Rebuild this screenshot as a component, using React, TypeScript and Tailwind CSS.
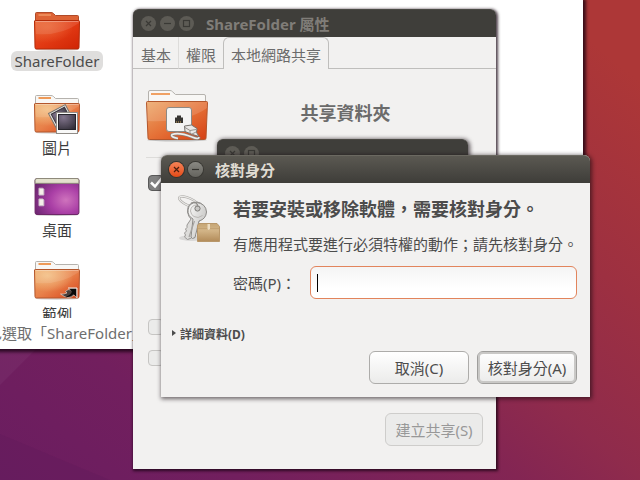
import type { ReactNode } from "react";

type Tone = "active" | "inactive";

function WindowButton({ kind, tone }: { kind: "close" | "min" | "max"; tone: Tone }) {
  const names = { close: "關閉", min: "最小化", max: "最大化" };
  const color =
    tone === "inactive"
      ? "bg-[#5d5b55] text-[#3a3935]"
      : kind === "close"
        ? "bg-linear-to-b from-[#f58255] to-[#e24912] text-[#4a1e0e] ring-1 ring-[#35332e]"
        : "bg-linear-to-b from-[#8a8983] to-[#65645e] text-[#33322e] ring-1 ring-[#3a3934]";
  return (
    <button type="button" aria-label={names[kind]} className={`size-[15px] rounded-full ${color}`}>
      <svg viewBox="0 0 15 15" className="size-[15px]" fill="none" stroke="currentColor" strokeWidth="1.2">
        {kind === "close" && <path d="M5 5l5 5M10 5l-5 5" />}
        {kind === "min" && <path d="M4 7.5h7" />}
        {kind === "max" && <rect x="4.5" y="4.5" width="6" height="6" />}
      </svg>
    </button>
  );
}

function TitleBar({ title, tone, kinds }: { title?: string; tone: Tone; kinds: ("close" | "min" | "max")[] }) {
  const look =
    tone === "active"
      ? "bg-linear-to-b from-[#5b5952] to-[#3e3d39] text-[#dfdbd2] border-t border-[#6b6961]"
      : "bg-[#3f3e3a] text-[#807d78] border-t border-[#4a4944]";
  return (
    <header className={`flex h-7 items-center gap-3 rounded-t-md px-2 ${look}`}>
      <div className="flex gap-1">
        {kinds.map((kind) => (
          <WindowButton key={kind} kind={kind} tone={tone} />
        ))}
      </div>
      {title && <h2 className="font-bold leading-5">{title}</h2>}
    </header>
  );
}

function FolderIcon({ id, red, children }: { id: string; red?: boolean; children?: ReactNode }) {
  return (
    <svg viewBox="0 0 46 39" className="h-[39px] w-[46px] overflow-visible" aria-hidden="true">
      <defs>
        <linearGradient id={id} x1="0" y1="0" x2="1" y2="1">
          <stop offset="0" stopColor={red ? "#e85f2c" : "#eda15c"} />
          <stop offset="0.5" stopColor={red ? "#e23a14" : "#e8814a"} />
          <stop offset="1" stopColor={red ? "#cf2404" : "#d8431a"} />
        </linearGradient>
        <radialGradient id={`${id}-glow`} cx="0.28" cy="0.2" r="0.6">
          <stop offset="0" stopColor={red ? "#ea6a3a" : "#f5cb92"} stopOpacity="0.8" />
          <stop offset="1" stopColor={red ? "#ea6a3a" : "#f5cb92"} stopOpacity="0" />
        </radialGradient>
      </defs>
      <ellipse cx="23" cy="37.6" rx="22" ry="1.4" fill="#000" opacity="0.14" />
      <path
        d="M1.5 10V1.5Q1.5 .5 2.5 .5H17Q18.5 .5 19.5 1.5L21.5 3.5H43.5Q44.5 3.5 44.5 4.5V10Z"
        fill={red ? "#dd6335" : "#f8f7f5"}
        stroke={red ? "#b04a28" : "#b5b2ad"}
      />
      <path d="M4.5 3H17" stroke={red ? "#ec8a58" : "#ee9a58"} strokeWidth="2" />
      <path d="M.5 9Q.5 8.5 1.5 8.5H44.5Q45.5 8.5 45.5 9.5L45 35.5Q45 37 43.5 37H2.5Q1 37 1 35.5Z" fill={`url(#${id})`} stroke={red ? "#b32a08" : "#b3562c"} />
      <path d="M1 9H45V36.5H1.5Z" fill={`url(#${id}-glow)`} />
      <path d="M2 22Q27 24 45 11V9.5H1.5Z" fill="#fff" opacity="0.1" />
      <path d="M1.5 9.5H44.5" stroke="#fff" opacity="0.35" />
      {children}
    </svg>
  );
}

function PicturesEmblem() {
  return (
    <>
      <defs>
        <radialGradient id="photo" cx="0.3" cy="0.2" r="1">
          <stop offset="0" stopColor="#82758d" />
          <stop offset="1" stopColor="#2c2932" />
        </radialGradient>
      </defs>
      <g transform="rotate(-28 26 22)">
        <rect x="17.5" y="13.5" width="19" height="19" fill="#e8e6e3" stroke="#77736c" />
        <rect x="19.5" y="15.5" width="15" height="14" fill="url(#photo)" stroke="#3c3840" />
      </g>
      <rect x="22.5" y="17.5" width="21" height="21" fill="#f8f8f7" stroke="#908c87" />
      <rect x="24.5" y="19.5" width="17" height="15" fill="url(#photo)" stroke="#26242b" />
    </>
  );
}

function LinkEmblem() {
  return (
    <>
      <path d="M26.5 33Q30 33.5 33 32L31.5 30.5Q34 27.5 37 29L35.5 27.5H42.5V36.5L40 34Q35 39.5 26.5 33Z" fill="#4a3f3b" stroke="#e9e4df" strokeWidth="0.6" />
      <path d="M35 27.5H42.5V36L39.5 33Q36 37 31 36Q37 34 38 30.5Z" fill="#080808" />
      <path d="M34 27H43V37" fill="none" stroke="#f1ece8" />
    </>
  );
}

function DesktopIcon() {
  return (
    <svg viewBox="0 0 46 39" className="h-[39px] w-[46px]" aria-hidden="true">
      <defs>
        <radialGradient id="desk" cx="0.7" cy="0.6" r="0.8">
          <stop offset="0" stopColor="#cf73bd" />
          <stop offset="0.45" stopColor="#aa3fa6" />
          <stop offset="1" stopColor="#69256f" />
        </radialGradient>
      </defs>
      <ellipse cx="23" cy="37.7" rx="22" ry="1.2" fill="#000" opacity="0.2" />
      <rect x="0.5" y="0.5" width="45" height="37" rx="2" fill="url(#desk)" stroke="#6a2263" />
      <path d="M.5 5.5V2.5Q.5 .5 2.5 .5H43.5Q45.5 .5 45.5 2.5V5.5Z" fill="#e3e1cd" stroke="#8d8b7a" />
      <path d="M4.5 10.5H8.5L9.5 11.5V17.5H4.5ZM4.5 21.5H8.5L9.5 22.5V28.5H4.5Z" fill="#f4efe9" stroke="#c8b9c6" />
    </svg>
  );
}

function ShareIcon() {
  return (
    <svg viewBox="0 0 62 52" className="h-[52px] w-[62px] shrink-0" aria-hidden="true">
      <defs>
        <linearGradient id="share" x1="0" y1="0" x2="1" y2="1">
          <stop offset="0" stopColor="#eba768" />
          <stop offset="0.5" stopColor="#e57238" />
          <stop offset="1" stopColor="#d53f14" />
        </linearGradient>
      </defs>
      <ellipse cx="31" cy="50" rx="30" ry="1.5" fill="#000" opacity="0.2" />
      <path d="M2.5 12V2Q2.5 .5 4 .5H24Q25.5 .5 26.5 1.7L29.5 4.5H58Q59.5 4.5 59.5 6V13H2.5Z" fill="#f8f7f5" stroke="#b5b2ad" />
      <path d="M5 4H24" stroke="#f0a164" strokeWidth="2" />
      <path d="M.5 12.5Q.5 11.5 1.5 11.5H60.5Q61.5 11.5 61.5 12.5L60 48Q60 49.5 58.5 49.5H3.5Q2 49.5 2 48Z" fill="url(#share)" stroke="#b3562c" />
      <path d="M1 12H61V18Q40 33 1.5 31Z" fill="#fff" opacity="0.14" />
      <rect x="20.5" y="17.5" width="25" height="24" rx="2.5" fill="#f4f4f3" stroke="#8d8984" />
      <path d="M29 33V27.5H31V25.5H35V27.5H37V33Z" fill="#373532" />
      <path d="M30 32H36" stroke="#d2ac64" strokeWidth="1" strokeDasharray="1 1" />
      <path d="M53 47Q53 50 46 47Q33 42 26 44.5Q24 47 32 48.5" fill="none" stroke="#87827c" strokeWidth="3" />
      <path d="M53 47Q53 50 46 47Q33 42 26 44.5Q24 47 32 48.5" fill="none" stroke="#efeeec" strokeWidth="1.6" />
      <path d="M38.5 36L45.5 35L51 38.5L50.5 42.5L53 46.5L46.5 44.5L39 41.5Z" fill="#e9e8e6" stroke="#77736e" />
      <path d="M39 37.5L44 40.5L50 39.5M44 40.5V43.5M46 44L50 42" fill="none" stroke="#96928d" />
    </svg>
  );
}

function KeysIcon() {
  return (
    <svg viewBox="0 0 48 50" className="h-[50px] w-12 shrink-0 overflow-visible" aria-hidden="true">
      <defs>
        <linearGradient id="metal" x1="0" y1="0" x2="1" y2="0.6">
          <stop offset="0" stopColor="#fcfcfb" />
          <stop offset="1" stopColor="#c5c4c2" />
        </linearGradient>
        <linearGradient id="box" x1="0" y1="0" x2="0" y2="1">
          <stop offset="0" stopColor="#c6a675" />
          <stop offset="0.4" stopColor="#d2b487" />
          <stop offset="1" stopColor="#b28b59" />
        </linearGradient>
      </defs>
      <ellipse cx="19" cy="43" rx="13" ry="3" fill="#000" opacity="0.1" />
      <g transform="rotate(24 14 6)">
        <ellipse cx="16" cy="6" rx="10.5" ry="3.6" fill="none" stroke="#a9a7a4" strokeWidth="2.4" />
        <ellipse cx="16" cy="6" rx="10.5" ry="3.6" fill="none" stroke="#ebeae8" strokeWidth="1.2" />
      </g>
      <path d="M24 7Q14 7 14.5 17Q15.5 22 18 24L14 30V32.5L12.5 34L13.5 36L11.5 38L12.5 40L11.5 42L14.5 44.5L18.5 43L26 26Q31.5 24 32 17Q31.5 8 24 7Z" fill="#dddcda" stroke="#999795" />
      <path d="M23.5 7.5Q16 7.5 15 15Q14.5 21 20 24L18 42L19.5 43.5L22 42.5L26 26Q33 24 33.5 17Q33 8.5 23.5 7.5Z" fill="url(#metal)" stroke="#8c8a87" />
      <path d="M24 10Q18 10 17.5 16Q18 20 21 21.5Q25 24 29.5 20.5" fill="none" stroke="#b9b7b4" />
      <path d="M21.5 26L16 42" stroke="#a5a3a0" strokeWidth="1.2" />
      <circle cx="24.5" cy="13.5" r="2.6" fill="#c9c8c6" stroke="#7b7976" />
      <path d="M18 8Q24.5 6 25 12" fill="none" stroke="#8f8d8a" strokeWidth="1.2" />
      <path d="M24.5 30.5L26 28.5H44L46.5 31.5V46.5H24.5Z" fill="url(#box)" stroke="#b8976a" />
      <path d="M25 33.5H46" stroke="#c3a273" />
      <path d="M34.5 29H37V34L35.7 35L34.5 34Z" fill="#ecdcc0" />
    </svg>
  );
}

const files = [
  { name: "ShareFolder", selected: true, icon: <FolderIcon id="f-share" red /> },
  { name: "圖片", icon: <FolderIcon id="f-pic"><PicturesEmblem /></FolderIcon> },
  { name: "桌面", icon: <DesktopIcon /> },
  { name: "範例", icon: <FolderIcon id="f-ex"><LinkEmblem /></FolderIcon> },
];

function FileManager() {
  return (
    <section className="absolute -left-[13px] right-[57px] top-0 bg-white shadow-[1px_1px_3px_2px_rgba(20,0,15,0.75)]">
      <ul className="flex h-[318px] w-[140px] flex-col gap-[21px] overflow-hidden pt-3">
        {files.map((file) => (
          <li key={file.name} className="flex h-[62px] shrink-0 flex-col items-center">
            {file.icon}
            <span
              className={`rounded-md px-1 leading-5 ${file.selected ? "bg-[#dfdedd] text-[#4c4c4c]" : "pt-1 text-[#3c3c3c]"}`}
            >
              {file.name}
            </span>
          </li>
        ))}
      </ul>
      <footer className="h-[31px] pt-[3px] leading-6 text-[#6e6e6e]">已選取「ShareFolder」</footer>
    </section>
  );
}

function CheckBox({ label, checked, disabled }: { label: string; checked?: boolean; disabled?: boolean }) {
  return (
    <span className="relative ml-[2px] flex size-4">
      <input
        type="checkbox"
        aria-label={label}
        defaultChecked={checked}
        disabled={disabled}
        className="size-4 appearance-none rounded-[4px] border border-[#595959] bg-[#818181] disabled:border-[#c6c5c3] disabled:bg-[#ebebea]"
      />
      {checked && (
        <svg viewBox="0 0 16 16" className="pointer-events-none absolute inset-0 size-4" fill="none" stroke="#fff" strokeWidth="2.5">
          <path d="M3 7.5L7 11.5L14 3" />
        </svg>
      )}
    </span>
  );
}

function PropertiesWindow() {
  return (
    <section className="absolute left-[133px] top-[9px] flex h-[460px] w-[363px] flex-col rounded-t-md bg-[#f2f1f0] text-[#6b6b6b] shadow-[1px_1px_3px_1px_rgba(20,0,15,0.75)]">
      <TitleBar title="ShareFolder 屬性" tone="inactive" kinds={["close", "min", "max"]} />
      <div role="tablist" className="flex h-8 shrink-0">
        <button type="button" role="tab" className="border-b border-r border-b-[#bfbebc] border-r-[#dddcda] pl-2 pr-[7px] pt-1">
          基本
        </button>
        <button type="button" role="tab" className="border-b border-[#bfbebc] px-[7px] pt-1">
          權限
        </button>
        <button
          type="button"
          role="tab"
          aria-selected="true"
          className="rounded-t-md border border-b-0 border-[#bfbebc] px-[7px] pt-[2px]"
        >
          本地網路共享
        </button>
        <span className="grow border-b border-[#bfbebc]" />
      </div>
      <div className="flex grow flex-col px-[13px] pb-[23px] pt-[21px]">
        <div className="flex items-center">
          <ShareIcon />
          <h3 className="grow pb-[6px] text-center text-lg font-bold leading-6">共享資料夾</h3>
        </div>
        <hr className="mb-[17px] mt-[15px] border-[#dddcda]" />
        <CheckBox label="共享此資料夾" checked />
        <div className="mt-32 flex flex-col gap-[15px]">
          <CheckBox label="允許其他使用者建立與刪除檔案" disabled />
          <CheckBox label="允許訪客存取" disabled />
        </div>
        <button
          type="button"
          disabled
          className="mt-auto h-[33px] w-[98px] self-end rounded-md border border-[#cecdcb] bg-[#ebebea] text-[#989898]"
        >
          建立共享(S)
        </button>
      </div>
    </section>
  );
}

function AuthDialog() {
  return (
    <section
      role="dialog"
      aria-labelledby="auth-heading"
      className="absolute left-[161px] top-[155px] w-max rounded-t-md bg-[#f2f1f0] text-[#4c4c4c] shadow-[1px_1px_4px_1px_rgba(20,10,15,0.6)]"
    >
      <TitleBar title="核對身分" tone="active" kinds={["close", "min"]} />
      <form className="px-3 pb-[13px] pt-3" onSubmit={(event) => event.preventDefault()}>
        <div className="flex gap-3">
          <KeysIcon />
          <div>
            <h1 id="auth-heading" className="text-lg font-bold leading-7">若要安裝或移除軟體，需要核對身分。</h1>
            <p className="mt-[9px] leading-6">有應用程式要進行必須特權的動作；請先核對身分。</p>
            <div className="mr-px mt-[10px] flex items-center">
              <label htmlFor="password" className="w-[77px]">密碼(P)：</label>
              <span className="relative flex grow">
                <input
                  id="password"
                  type="password"
                  className="h-[33px] w-full rounded-md border border-[#e2845c] bg-linear-to-b from-[#f4f4f4] to-white to-70% px-[6px] outline-none"
                />
                <span className="pointer-events-none absolute left-[7px] top-2 h-[18px] w-px bg-black" />
              </span>
            </div>
          </div>
        </div>
        <button type="button" className="-ml-px mt-[26px] flex items-center gap-1 text-xs font-bold leading-5">
          <svg viewBox="0 0 4 6" className="-mt-1 h-[6px] w-1" fill="currentColor" aria-hidden="true">
            <path d="M0 0L4 3L0 6Z" />
          </svg>
          詳細資料(D)
        </button>
        <div className="mr-px mt-[6px] flex justify-end gap-2">
          <button type="button" className="h-[33px] w-[100px] rounded-md border border-[#adacaa] bg-linear-to-b from-white to-[#ebebea]">
            取消(C)
          </button>
          <button
            type="submit"
            className="h-[33px] w-[100px] rounded-md border border-[#9f9e9c] bg-linear-to-b from-white to-[#ebebea] shadow-[inset_0_0_0_2px_#c9c8c6]"
          >
            核對身分(A)
          </button>
        </div>
      </form>
    </section>
  );
}

export default function App() {
  return (
    <main className="relative h-screen overflow-hidden bg-[linear-gradient(40deg,#6a1d60_0%,#721f5e_20%,#832553_43%,#8f2b4c_53%,#9d3041_70%,#ad3737_92%)] font-['Noto_Sans','Noto_Sans_CJK_TC',sans-serif] text-[15px] leading-5">
      <svg viewBox="0 0 640 480" preserveAspectRatio="none" className="absolute inset-0 size-full" aria-hidden="true">
        <path d="M0 340H45L0 385Z" fill="#fff" opacity="0.04" />
        <path d="M0 434L110 480H0Z" fill="#401850" opacity="0.1" />
      </svg>
      <FileManager />
      <PropertiesWindow />
      <section className="absolute left-[217px] top-[139px] h-56 w-[251px] rounded-t-md bg-[#f2f1f0] shadow-[1px_1px_4px_1px_rgba(20,10,15,0.7)]">
        <TitleBar tone="inactive" kinds={["close", "max"]} />
      </section>
      <AuthDialog />
    </main>
  );
}
